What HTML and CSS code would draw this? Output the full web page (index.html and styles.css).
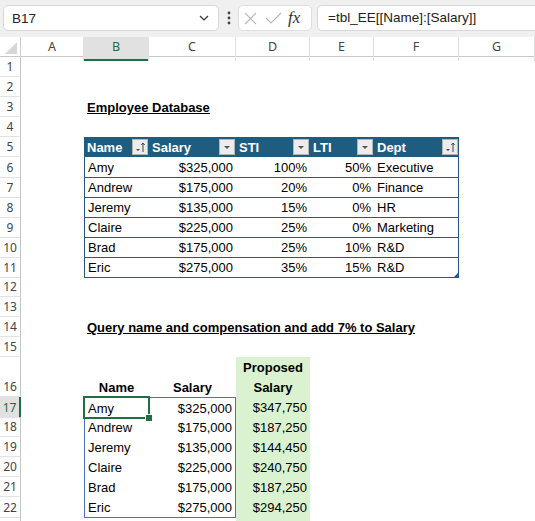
FILE: index.html
```html
<!DOCTYPE html>
<html lang="en">
<head>
  <meta charset="UTF-8">
  <meta name="viewport" content="width=device-width, initial-scale=1.0">
  <title>tbl_EE</title>
  <link rel="stylesheet" href="styles.css">
</head>
<body>
  <!-- строка формул -->
  <div class="topbar">
    <div class="namebox">
      <span>B17</span>
      <svg width="10" height="6" viewBox="0 0 10 6"><polyline points="1,1 5,5 9,1" fill="none" stroke="#333" stroke-width="1.2"/></svg>
    </div>
    <div class="dots">
      <svg width="4" height="14" viewBox="0 0 4 14" fill="#444"><circle cx="2" cy="2" r="1.4"/><circle cx="2" cy="7" r="1.4"/><circle cx="2" cy="12" r="1.4"/></svg>
    </div>
    <div class="fxbox">
      <svg width="13" height="13" viewBox="0 0 13 13"><path d="M1 1L12 12M12 1L1 12" stroke="#b8b8b8" stroke-width="1.1"/></svg>
      <svg width="17" height="12" viewBox="0 0 17 12"><polyline points="1,6 6,11 16,1" fill="none" stroke="#b8b8b8" stroke-width="1.1"/></svg>
      <span class="fx">fx</span>
    </div>
    <div class="formula">=tbl_EE[[Name]:[Salary]]</div>
  </div>

  <!-- лист -->
  <div class="sheet">
    <div class="srow colhead">
      <div class="corner"><svg width="21" height="20" viewBox="0 0 21 20"><polygon points="17,5 17,17 5,17" fill="#d6d6d6"/></svg></div>
      <div class="ch">A</div>
      <div class="ch sel">B</div>
      <div class="ch">C</div>
      <div class="ch">D</div>
      <div class="ch">E</div>
      <div class="ch">F</div>
      <div class="ch">G</div>
    </div>

    <div class="srow"><div class="rh">1</div></div>
    <div class="srow"><div class="rh">2</div></div>
    <div class="srow"><div class="rh">3</div><div class="cell"></div><div class="cell title">Employee Database</div></div>
    <div class="srow"><div class="rh">4</div></div>

    <!-- таблица tbl_EE -->
    <div class="srow">
      <div class="rh">5</div><div class="cell"></div>
      <div class="cell th"><span>Name</span><span class="fbtn"><svg width="14" height="14" viewBox="0 0 14 14"><polygon points="3,9 7,9 5,11" fill="#444"/><path d="M10 12V3M8.3 5L10 3L11.7 5" fill="none" stroke="#444" stroke-width="1"/></svg></span></div>
      <div class="cell th"><span>Salary</span><span class="fbtn"><svg width="14" height="14" viewBox="0 0 14 14"><polygon points="4,6 10,6 7,9" fill="#555"/></svg></span></div>
      <div class="cell th"><span>STI</span><span class="fbtn"><svg width="14" height="14" viewBox="0 0 14 14"><polygon points="4,6 10,6 7,9" fill="#555"/></svg></span></div>
      <div class="cell th"><span>LTI</span><span class="fbtn"><svg width="14" height="14" viewBox="0 0 14 14"><polygon points="4,6 10,6 7,9" fill="#555"/></svg></span></div>
      <div class="cell th"><span>Dept</span><span class="fbtn"><svg width="14" height="14" viewBox="0 0 14 14"><polygon points="3,9 7,9 5,11" fill="#444"/><path d="M10 12V3M8.3 5L10 3L11.7 5" fill="none" stroke="#444" stroke-width="1"/></svg></span></div>
    </div>
    <div class="srow"><div class="rh">6</div><div class="cell"></div><div class="cell td first">Amy</div><div class="cell td num">$325,000</div><div class="cell td num">100%</div><div class="cell td num">50%</div><div class="cell td last">Executive</div></div>
    <div class="srow"><div class="rh">7</div><div class="cell"></div><div class="cell td first">Andrew</div><div class="cell td num">$175,000</div><div class="cell td num">20%</div><div class="cell td num">0%</div><div class="cell td last">Finance</div></div>
    <div class="srow"><div class="rh">8</div><div class="cell"></div><div class="cell td first">Jeremy</div><div class="cell td num">$135,000</div><div class="cell td num">15%</div><div class="cell td num">0%</div><div class="cell td last">HR</div></div>
    <div class="srow"><div class="rh">9</div><div class="cell"></div><div class="cell td first">Claire</div><div class="cell td num">$225,000</div><div class="cell td num">25%</div><div class="cell td num">0%</div><div class="cell td last">Marketing</div></div>
    <div class="srow"><div class="rh">10</div><div class="cell"></div><div class="cell td first">Brad</div><div class="cell td num">$175,000</div><div class="cell td num">25%</div><div class="cell td num">10%</div><div class="cell td last">R&amp;D</div></div>
    <div class="srow"><div class="rh">11</div><div class="cell"></div><div class="cell td first">Eric</div><div class="cell td num">$275,000</div><div class="cell td num">35%</div><div class="cell td num">15%</div><div class="cell td last grip">R&amp;D</div></div>

    <div class="srow"><div class="rh">12</div></div>
    <div class="srow"><div class="rh">13</div></div>
    <div class="srow"><div class="rh">14</div><div class="cell"></div><div class="cell title">Query name and compensation and add 7% to Salary</div></div>
    <div class="srow"><div class="rh">15</div></div>

    <!-- результат запроса -->
    <div class="srow tall">
      <div class="rh">16</div><div class="cell"></div>
      <div class="cell head2"><span>Name</span></div>
      <div class="cell head2"><span>Salary</span></div>
      <div class="cell head2 green"><span>Proposed<br>Salary</span></div>
    </div>
    <div class="srow"><div class="rh sel">17</div><div class="cell"></div><div class="cell sp-l sp-t active">Amy</div><div class="cell num sp-r sp-t">$325,000</div><div class="cell num green">$347,750</div></div>
    <div class="srow"><div class="rh">18</div><div class="cell"></div><div class="cell sp-l">Andrew</div><div class="cell num sp-r">$175,000</div><div class="cell num green">$187,250</div></div>
    <div class="srow"><div class="rh">19</div><div class="cell"></div><div class="cell sp-l">Jeremy</div><div class="cell num sp-r">$135,000</div><div class="cell num green">$144,450</div></div>
    <div class="srow"><div class="rh">20</div><div class="cell"></div><div class="cell sp-l">Claire</div><div class="cell num sp-r">$225,000</div><div class="cell num green">$240,750</div></div>
    <div class="srow"><div class="rh">21</div><div class="cell"></div><div class="cell sp-l">Brad</div><div class="cell num sp-r">$175,000</div><div class="cell num green">$187,250</div></div>
    <div class="srow"><div class="rh">22</div><div class="cell"></div><div class="cell sp-l sp-b">Eric</div><div class="cell num sp-r sp-b">$275,000</div><div class="cell num green">$294,250</div></div>
    <!-- строка 23 видна только краем -->
    <div class="srow"><div class="rh"></div><div class="cell"></div><div class="cell"></div><div class="cell"></div><div class="cell green"></div></div>
  </div>
</body>
</html>
```

FILE: styles.css
```css
* {
  box-sizing: border-box;
}
body {
  margin: 0;
  width: 535px;
  height: 521px;
  overflow: hidden;
  background: #fff;
  font-family: "Liberation Sans", Arial, sans-serif;
}

/* строка формул */
.topbar {
  height: 37px;
  background: #f0f0f0;
  display: flex;
  align-items: flex-start;
  padding: 5px 0 0 3px;
  overflow: hidden;
}
.namebox {
  width: 216px;
  height: 26px;
  background: #fff;
  border: 1px solid #d8d8d8;
  border-radius: 5px;
  display: flex;
  align-items: center;
  justify-content: space-between;
  padding: 0 9px 0 8px;
  font-size: 13.5px;
  color: #222;
}
.dots {
  width: 19px;
  height: 26px;
  display: flex;
  align-items: center;
  justify-content: center;
}
.fxbox {
  width: 74px;
  height: 26px;
  background: #fff;
  border: 1px solid #dedede;
  border-radius: 5px;
  display: flex;
  align-items: center;
  gap: 8px;
  padding-left: 5px;
}
.fx {
  font-family: "Liberation Serif", serif;
  font-style: italic;
  font-size: 17px;
  color: #333;
  margin-left: -2px;
}
.formula {
  flex: 1;
  margin: 0 -10px 0 5px;
  height: 26px;
  background: #fff;
  border: 1px solid #d8d8d8;
  border-radius: 5px;
  padding-left: 10px;
  line-height: 24px;
  font-size: 13.5px;
  color: #222;
}

/* лист */
.srow {
  display: grid;
  grid-template-columns: 21px 63px 65px 87px 74px 64px 85px 76px;
  height: 20px;
}
.srow.tall {
  height: 40px;
}
.colhead {
  border-bottom: 1px solid #c8c8c8;
}
.corner {
  border-right: 1px solid #d0d0d0;
}
.ch {
  border-right: 1px solid #e0e0e0;
  text-align: center;
  font-family: "Noto Sans", sans-serif;
  font-size: 12.5px;
  line-height: 20px;
  color: #444;
}
.ch.sel {
  background: #e1e1e1;
  color: #1d6b42;
  box-shadow: inset 0 -2px 0 #1d7044;
}
.rh {
  border-right: 1px solid #c4c4c4;
  border-bottom: 1px solid #e2e2e2;
  display: flex;
  align-items: flex-end;
  justify-content: center;
  font-family: "Noto Sans", sans-serif;
  font-size: 12px;
  line-height: 19px;
  color: #444;
}
.rh.sel {
  background: #e1e1e1;
  color: #1d6b42;
  border-right: 2px solid #1d7044;
}

.cell {
  height: 100%;
  padding: 1px 3px 0;
  font-size: 13px;
  line-height: 19px;
  color: #000;
  white-space: nowrap;
}
.num {
  text-align: right;
}
.title {
  font-weight: bold;
  text-decoration: underline;
}

/* таблица */
.th {
  background: #1f5d80;
  color: #fff;
  font-weight: bold;
  display: flex;
  justify-content: space-between;
  padding-right: 1px;
}
.fbtn {
  width: 16px;
  height: 16px;
  margin-top: 1px;
  background: #ececec;
  border: 1px solid #b4b4b4;
  display: flex;
  align-items: center;
  justify-content: center;
}
.td {
  border-bottom: 1px solid #1f5d80;
}
.td.first {
  border-left: 1px solid #1f5d80;
}
.td.last {
  border-right: 1px solid #1f5d80;
}
.grip {
  position: relative;
}
.grip::after {
  content: "";
  position: absolute;
  right: 0;
  bottom: 0;
  border-left: 4px solid transparent;
  border-bottom: 4px solid #2b4fa0;
}

/* запрос */
.head2 {
  display: flex;
  flex-direction: column;
  justify-content: flex-end;
  text-align: center;
  font-weight: bold;
  line-height: 20px;
}
.head2 span {
  margin-bottom: -1px;
}
.green {
  background: #daf2d0;
}
.sp-l {
  border-left: 1px solid #4472c4;
}
.sp-r {
  border-right: 1px solid #4472c4;
}
.sp-t {
  border-top: 1px solid #4472c4;
}
.sp-b {
  border-bottom: 1px solid #4472c4;
}
.active {
  position: relative;
}
.active::after {
  content: "";
  position: absolute;
  left: -2px;
  top: -2px;
  right: -1px;
  bottom: -1px;
  border: 2px solid #1d7044;
}
.active::before {
  content: "";
  position: absolute;
  right: -4px;
  bottom: -4px;
  width: 6px;
  height: 6px;
  background: #1d7044;
  border: 1px solid #fff;
  z-index: 2;
}
```
